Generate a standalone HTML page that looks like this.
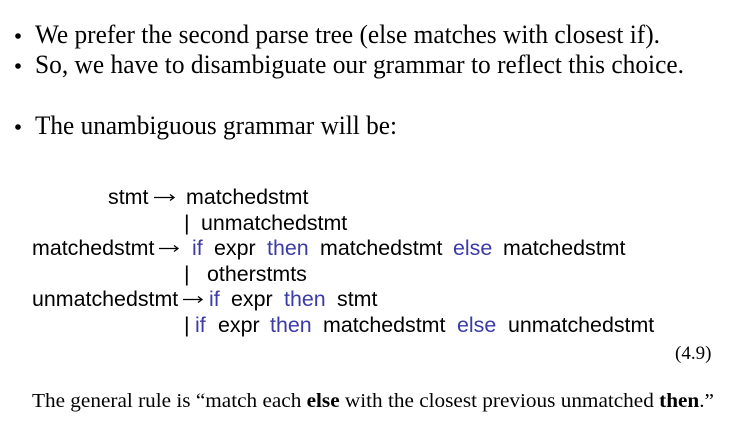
<!DOCTYPE html>
<html><head><meta charset="utf-8"><style>
html,body{margin:0;padding:0;background:#fff;width:730px;height:427px;overflow:hidden}
svg{display:block}
.s{font-family:"Liberation Serif",serif;fill:#000}
.a{font-family:"Liberation Sans",sans-serif;font-size:21.4px;fill:#000}
.b{fill:#3b3ba8}
</style></head><body>
<svg width="730" height="427" xmlns="http://www.w3.org/2000/svg">
<circle cx="18" cy="36" r="2.8" fill="#000"/>
<circle cx="18" cy="66" r="2.8" fill="#000"/>
<circle cx="18" cy="127" r="2.8" fill="#000"/>
<text class="s" font-size="26" x="35" y="43" textLength="625" lengthAdjust="spacingAndGlyphs">We prefer the second parse tree (else matches with closest if).</text>
<text class="s" font-size="26" x="35" y="73" textLength="649" lengthAdjust="spacingAndGlyphs">So, we have to disambiguate our grammar to reflect this choice.</text>
<text class="s" font-size="26" x="35" y="134" textLength="362" lengthAdjust="spacingAndGlyphs">The unambiguous grammar will be:</text>

<g stroke="#000" stroke-width="1.3" fill="none">
<path d="M154 197.5H174M170 194.5L174 197.5L170 200.5"/>
<path d="M159 248.5H178M174 245.5L178 248.5L174 251.5"/>
<path d="M183 299.5H202M198 296.5L202 299.5L198 302.5"/>
</g>
<g class="a">
<text x="108" y="204">stmt</text><text x="186" y="204">matchedstmt</text>
<text x="184" y="230">|</text><text x="201" y="230">unmatchedstmt</text>
<text x="32" y="255">matchedstmt</text><text x="192" y="255" class="b">if</text><text x="214" y="255">expr</text><text x="267" y="255" class="b">then</text><text x="320" y="255">matchedstmt</text><text x="453" y="255" class="b">else</text><text x="503" y="255">matchedstmt</text>
<text x="184" y="281">|</text><text x="207" y="281">otherstmts</text>
<text x="32" y="306">unmatchedstmt</text><text x="209" y="306" class="b">if</text><text x="231" y="306">expr</text><text x="284" y="306" class="b">then</text><text x="337" y="306">stmt</text>
<text x="184" y="332">|</text><text x="195" y="332" class="b">if</text><text x="218" y="332">expr</text><text x="270" y="332" class="b">then</text><text x="323" y="332">matchedstmt</text><text x="457" y="332" class="b">else</text><text x="508" y="332">unmatchedstmt</text>
</g>
<text class="s" font-size="19" x="675" y="359">(4.9)</text>
<text class="s" font-size="20" x="32" y="407" textLength="682" lengthAdjust="spacingAndGlyphs">The general rule is “match each <tspan font-weight="bold">else</tspan> with the closest previous unmatched <tspan font-weight="bold">then</tspan>.”</text>
</svg>
</body></html>
